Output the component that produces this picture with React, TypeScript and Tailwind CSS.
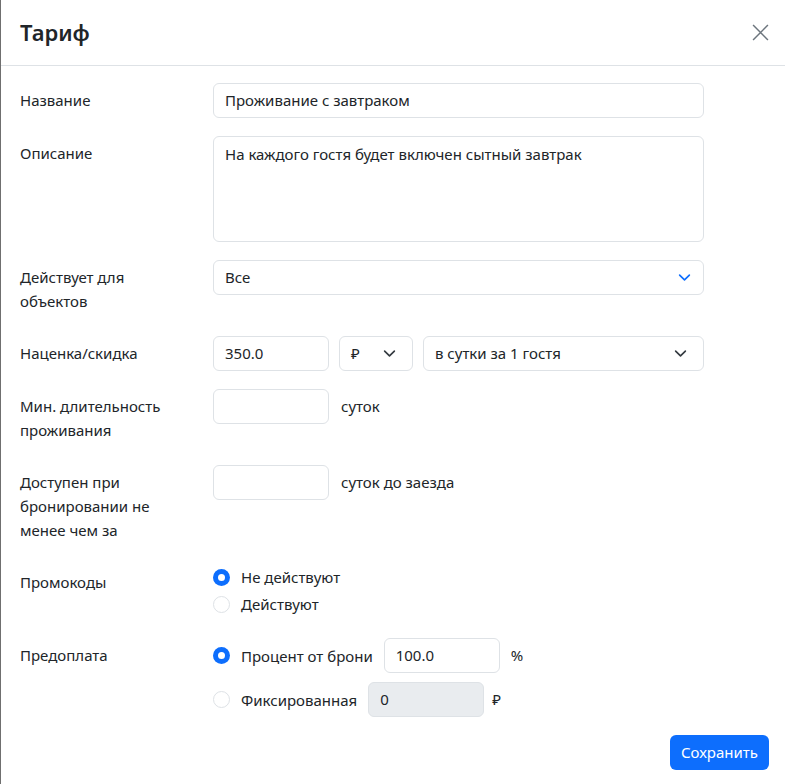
import type { ReactNode } from 'react'

const font = { fontFamily: '"Noto Sans", "Open Sans", Arial, sans-serif' }

function Chevron({ className }: { className: string }) {
  return (
    <svg viewBox="0 0 16 16" className={className} fill="none" stroke="currentColor" strokeWidth="2" strokeLinecap="round" strokeLinejoin="round">
      <path d="M2 5l6 6 6-6" />
    </svg>
  )
}

function Row({ label, children }: { label: ReactNode; children: ReactNode }) {
  return (
    <div className="flex">
      <div className="w-[176px] shrink-0 py-[5px] leading-[24px]">{label}</div>
      <div className="ml-[17px] flex-1">{children}</div>
    </div>
  )
}

function Radio({ checked, label }: { checked?: boolean; label: string }) {
  return (
    <label className="flex items-center gap-[11px] leading-[24px]">
      {checked ? (
        <span className="flex h-[17px] w-[17px] items-center justify-center rounded-full bg-[#0d6efd]">
          <span className="h-[7px] w-[7px] rounded-full bg-white" />
        </span>
      ) : (
        <span className="h-[17px] w-[17px] rounded-full border border-[#dee2e6] bg-white" />
      )}
      <span>{label}</span>
    </label>
  )
}

const input =
  'h-[35px] rounded-[6px] border border-[#dee2e6] px-[11px] flex items-center text-[15px] text-[#212529]'

export default function App() {
  return (
    <div className="min-h-[784px] w-full border-l border-[#6f6f6f] bg-white text-[15px] text-[#212529]" style={font}>
      <div className="flex h-[66px] items-center justify-between border-b border-[#dee2e6] pl-[19px] pr-4">
        <h1 className="text-[22px] font-semibold">Тариф</h1>
        <button className="text-[#6c757d]">
          <svg viewBox="0 0 16 16" className="h-[17px] w-[17px]" stroke="currentColor" strokeWidth="1.4">
            <path d="M1 1l14 14M15 1L1 15" />
          </svg>
        </button>
      </div>

      <div className="flex w-[703px] flex-col gap-[18px] pl-[19px] pt-[17px]">
        <Row label="Название">
          <div className={input}>Проживание с завтраком</div>
        </Row>

        <Row label="Описание">
          <div className="h-[106px] rounded-[6px] border border-[#dee2e6] px-[11px] py-[5px] leading-[24px]">
            На каждого гостя будет включен сытный завтрак
          </div>
        </Row>

        <Row label={<>Действует для<br />объектов</>}>
          <div className={`${input} justify-between pr-[12px]`}>
            <span>Все</span>
            <Chevron className="h-[13px] w-[13px] text-[#0d6efd]" />
          </div>
        </Row>

        <Row label="Наценка/скидка">
          <div className="flex gap-[10px]">
            <div className={`${input} w-[116px]`}>350.0</div>
            <div className={`${input} w-[74px] justify-between pr-[16px]`}>
              <span>₽</span>
              <Chevron className="h-[13px] w-[13px] text-[#343a40]" />
            </div>
            <div className={`${input} flex-1 justify-between pr-[16px]`}>
              <span>в сутки за 1 гостя</span>
              <Chevron className="h-[13px] w-[13px] text-[#343a40]" />
            </div>
          </div>
        </Row>

        <Row label={<>Мин. длительность<br />проживания</>}>
          <div className="flex items-center gap-[12px]">
            <div className={`${input} w-[116px]`} />
            <span>суток</span>
          </div>
        </Row>

        <Row label={<>Доступен при<br />бронировании не<br />менее чем за</>}>
          <div className="flex items-center gap-[12px]">
            <div className={`${input} w-[116px]`} />
            <span>суток до заезда</span>
          </div>
        </Row>

        <Row label="Промокоды">
          <div className="flex flex-col gap-[3px] pb-[4px]">
            <Radio checked label="Не действуют" />
            <Radio label="Действуют" />
          </div>
        </Row>

        <Row label="Предоплата">
          <div className="flex flex-col gap-[9px]">
            <div className="flex items-center">
              <Radio checked label="Процент от брони" />
              <div className={`${input} ml-[11px] w-[116px]`}>100.0</div>
              <span className="ml-[11px]">%</span>
            </div>
            <div className="flex items-center">
              <Radio label="Фиксированная" />
              <div className={`${input} ml-[11px] w-[116px] bg-[#e9ecef]`}>0</div>
              <span className="ml-[8px]">₽</span>
            </div>
          </div>
        </Row>
      </div>

      <div className="flex justify-end pr-4 pt-[18px]">
        <button className="h-[35px] rounded-[6px] bg-[#0d6efd] px-[11px] text-[15px] text-white">Сохранить</button>
      </div>
    </div>
  )
}
